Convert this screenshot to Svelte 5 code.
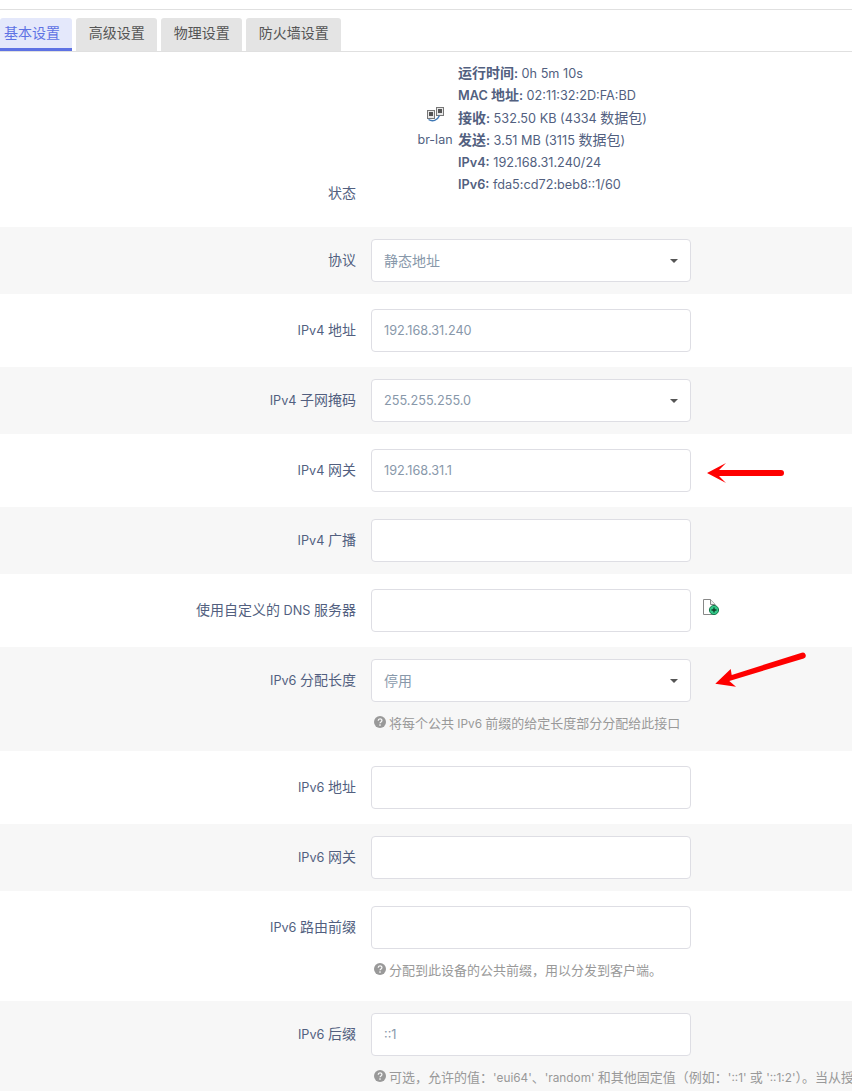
<script>
	const tabs = ["基本设置", "高级设置", "物理设置", "防火墙设置"];

	const info = [
		{ key: "运行时间:", value: "0h 5m 10s" },
		{ key: "MAC 地址:", value: "02:11:32:2D:FA:BD" },
		{ key: "接收:", value: "532.50 KB (4334 数据包)" },
		{ key: "发送:", value: "3.51 MB (3115 数据包)" },
		{ key: "IPv4:", value: "192.168.31.240/24" },
		{ key: "IPv6:", value: "fda5:cd72:beb8::1/60" },
	];

	const rows = [
		{ label: "协议", value: "静态地址", select: true },
		{ label: "IPv4 地址", value: "192.168.31.240" },
		{ label: "IPv4 子网掩码", value: "255.255.255.0", select: true },
		{ label: "IPv4 网关", value: "192.168.31.1", arrow: "flat" },
		{ label: "IPv4 广播", value: "" },
		{ label: "使用自定义的 DNS 服务器", value: "", add: true },
		{
			label: "IPv6 分配长度",
			value: "停用",
			select: true,
			arrow: "tilt",
			help: "将每个公共 IPv6 前缀的给定长度部分分配给此接口",
		},
		{ label: "IPv6 地址", value: "" },
		{ label: "IPv6 网关", value: "" },
		{ label: "IPv6 路由前缀", value: "", help: "分配到此设备的公共前缀，用以分发到客户端。" },
		{
			label: "IPv6 后缀",
			value: "::1",
			help: "可选，允许的值：'eui64'、'random' 和其他固定值（例如：'::1' 或 '::1:2'）。当从授权的前缀中获取到地址时使用此后缀",
		},
	];

	// chinese runs are a bit larger than the latin around them
	function split(text) {
		return text
			.split(/([\u3000-\u9fff\uff00-\uffef]+)/)
			.filter((s) => s !== "")
			.map((s) => ({ text: s, cjk: /[\u3000-\u9fff\uff00-\uffef]/.test(s) }));
	}
</script>

{#snippet mixed(text)}{#each split(text) as part}{#if part.cjk}<span class="cjk">{part.text}</span>{:else}{part.text}{/if}{/each}{/snippet}

<div class="page">
	<ul class="tabs">
		{#each tabs as tab, i}
			<li class="tab" class:active={i === 0}>{tab}</li>
		{/each}
	</ul>

	<div class="status">
		<div class="status-label">{@render mixed("状态")}</div>
		<div class="device">
			<svg width="17" height="15" viewBox="0 0 17 15">
				<rect x="0.500" y="3.500" width="7" height="8" fill="#e8e8e8" stroke="#777" />
				<rect x="2" y="5" width="4" height="4" fill="#555" />
				<rect x="9.500" y="0.500" width="7" height="8" fill="#e8e8e8" stroke="#777" />
				<rect x="11" y="2" width="4" height="4" fill="#555" />
				<path d="M1.500 12.500c4 2.500 9 1 11-4" fill="none" stroke="#3f78b5" stroke-width="1.400" />
			</svg>
			<span class="device-name">br-lan</span>
		</div>
		<div class="info">
			{#each info as line}
				<div class="info-line"><b>{@render mixed(line.key)}</b> {@render mixed(line.value)}</div>
			{/each}
		</div>
	</div>

	{#each rows as row, i}
		<div class="row" class:odd={i % 2 === 1} class:has-help={row.help}>
			<div class="label">{@render mixed(row.label)}</div>
			<div class="field">
				<div class="control">
					<div class="input">
						<span>{@render mixed(row.value)}</span>
						{#if row.select}<i class="caret"></i>{/if}
					</div>
					{#if row.add}
						<svg class="add" width="18" height="18" viewBox="0 0 18 18">
							<path d="M1.500 1.500h7l4.500 5v10h-11.500z" fill="#fff" stroke="#888" />
							<path d="M8.500 1.500v5h4.500" fill="#eee" stroke="#888" />
							<circle cx="12" cy="12" r="4.600" fill="#35c98a" stroke="#177a4d" />
							<path d="M12 9.500v5M9.500 12h5" stroke="#0c3b26" stroke-width="1.300" />
						</svg>
					{/if}
					{#if row.arrow === "flat"}
						<svg class="arrow flat" width="80" height="22" viewBox="0 0 80 22">
							<path d="M1 11 20 1 13 8H75a3 3 0 0 1 0 6H13l7 7z" fill="#fe0000" />
						</svg>
					{/if}
					{#if row.arrow === "tilt"}
						<svg class="arrow tilt" width="92" height="38" viewBox="0 0 92 38">
							<path d="M.3 32.700 15.700 18 16.700 24 86.700 1.700a3 3 0 0 1 2 5.700L14.300 30 21 35.700z" fill="#fe0000" />
						</svg>
					{/if}
				</div>
				{#if row.help}
					<div class="help">
						<svg width="12" height="12" viewBox="0 0 12 12">
							<circle cx="6" cy="6" r="6" fill="#999" />
							<path d="M4.200 4.700c0-2.400 3.700-2.400 3.700-.2 0 1.400-1.900 1.400-1.900 2.800" fill="none" stroke="#f7f7f7" stroke-width="1.300" />
							<rect x="5.300" y="8.300" width="1.400" height="1.500" fill="#f7f7f7" />
						</svg>
						<span>{@render mixed(row.help)}</span>
					</div>
				{/if}
			</div>
		</div>
	{/each}
</div>

<style>
	:global(body) {
		background-color: #fff;
		overflow: hidden;
	}

	.page {
		height: 100vh;
		overflow: hidden;
		padding-top: 9px;
		box-sizing: border-box;
		font-family: Inter, "Noto Sans CJK SC", sans-serif;
		font-size: 12.700px;
		color: #525f7f;
	}

	.cjk {
		font-size: 1.102em;
	}

	.tabs {
		display: flex;
		gap: 4px;
		list-style: none;
		margin: 0;
		padding: 8px 0 0;
		height: 33px;
		border-top: 1px solid #e0e0e0;
		border-bottom: 1px solid #e0e0e0;
	}

	.tab {
		padding: 0 12.500px;
		height: 33px;
		line-height: 29px;
		font-size: 14px;
		background-color: #e4e4e4;
		border-radius: 3px 3px 0 0;
		color: #555;
	}

	.tab.active {
		padding: 0 12px 0 4px;
		margin-right: 0.300px;
		height: 30px;
		background-color: #e4e8fb;
		border-bottom: 3px solid #5e72e4;
		color: #5e72e4;
	}

	.status {
		display: grid;
		grid-template-columns: 356px 102px auto;
		height: 175px;
	}

	.status-label {
		align-self: end;
		padding-bottom: 25px;
		text-align: right;
	}

	.device {
		display: flex;
		flex-direction: column;
		align-items: center;
		justify-content: center;
		gap: 10px;
		padding: 20px 6px 0 62px;
		height: 110px;
		font-size: 12.500px;
	}

	.device-name {
		white-space: nowrap;
	}

	.info {
		padding-top: 10px;
	}

	.info-line {
		height: 22.400px;
		line-height: 22px;
	}

	.info b {
		font-weight: 600;
	}

	.row {
		display: grid;
		grid-template-columns: 356px 1fr;
		column-gap: 15px;
		padding: 12px 0;
		background-color: #f7f7f7;
	}

	.row.odd {
		padding: 15px 0;
		background-color: #fff;
	}

	.row.has-help {
		padding-bottom: 19px;
	}

	.row.odd.has-help {
		padding-bottom: 22px;
	}

	.label {
		height: 43px;
		line-height: 42px;
		text-align: right;
	}

	.field {
		min-width: 0;
	}

	.control {
		position: relative;
		display: flex;
		align-items: center;
	}

	.input {
		position: relative;
		width: 320px;
		height: 43px;
		box-sizing: border-box;
		padding: 0 12px;
		line-height: 41px;
		background-color: #fff;
		border: 1px solid #dedee4;
		border-radius: 4px;
		color: #8898aa;
	}

	.input .cjk {
		vertical-align: 2px;
	}

	.caret {
		position: absolute;
		top: 19px;
		right: 12px;
		border: 4.500px solid transparent;
		border-top-color: #555;
		border-bottom-width: 0;
	}

	.add {
		margin-left: 11px;
		margin-top: -8px;
	}

	.arrow {
		position: absolute;
	}

	.arrow.flat {
		left: 335px;
		top: 13px;
	}

	.arrow.tilt {
		left: 344px;
		top: -8px;
	}

	.help {
		display: flex;
		align-items: center;
		gap: 3px;
		margin-top: 10px;
		padding-left: 3px;
		height: 20px;
		font-size: 11.800px;
		color: #999;
		white-space: nowrap;
	}

	.help svg {
		flex-shrink: 0;
	}
</style>
